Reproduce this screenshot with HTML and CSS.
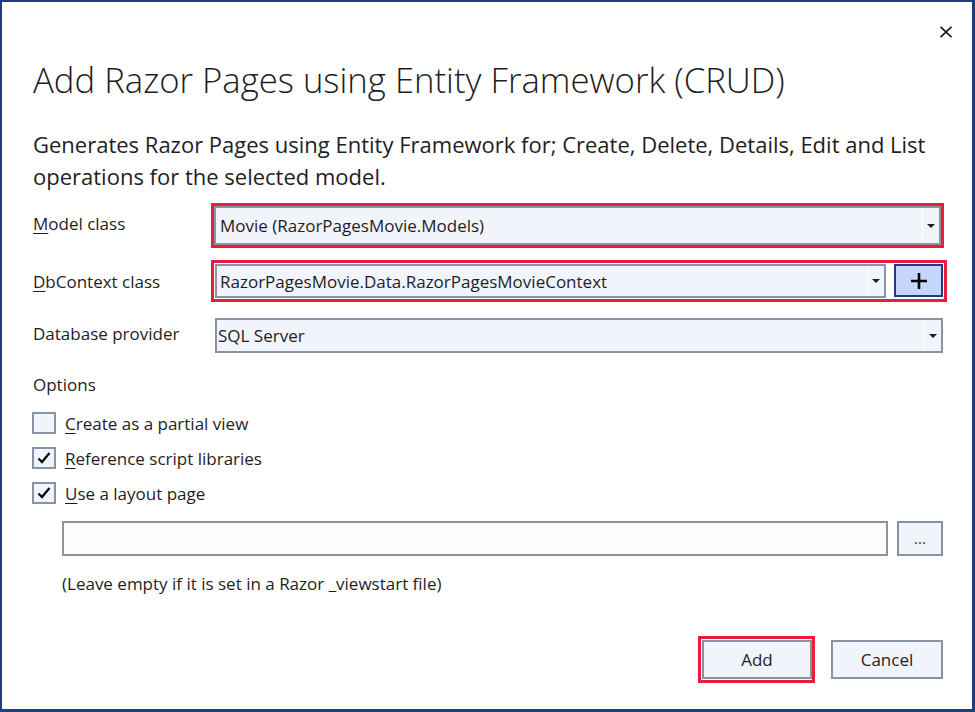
FILE: index.html
```html
<!DOCTYPE html>
<html lang="en">
<head>
<meta charset="utf-8">
<title>Add Razor Pages using Entity Framework (CRUD)</title>
<link rel="stylesheet" href="styles.css">
</head>
<body>
<div class="dialog">
  <div class="titlebar">
    <button class="close" aria-label="Close">
      <svg width="14" height="12" viewBox="0 0 14 12"><path d="M1.5 0.8 L12.5 11.2 M12.5 0.8 L1.5 11.2" stroke="#1e1e1e" stroke-width="1.7" fill="none"/></svg>
    </button>
  </div>
  <h1 class="title">Add Razor Pages using Entity Framework (CRUD)</h1>
  <p class="desc">Generates Razor Pages using Entity Framework for; Create, Delete, Details, Edit and List<br>operations for the selected model.</p>

  <div class="field field-model">
    <label class="label"><u>M</u>odel class</label>
    <div class="ring ring-model">
      <div class="combo combo-tall">
        <span class="combo-text">Movie (RazorPagesMovie.Models)</span>
        <span class="combo-arrow"><span class="tri"></span></span>
      </div>
    </div>
  </div>

  <div class="field field-db">
    <label class="label"><u>D</u>bContext class</label>
    <div class="ring ring-db">
      <div class="combo combo-db">
        <span class="combo-text">RazorPagesMovie.Data.RazorPagesMovieContext</span>
        <span class="combo-arrow"><span class="tri"></span></span>
      </div>
      <button class="plus" aria-label="Add">
        <svg width="18" height="18" viewBox="0 0 18 18"><path d="M9 1 V17 M1 9 H17" stroke="#000" stroke-width="2.6" fill="none"/></svg>
      </button>
    </div>
  </div>

  <div class="field field-provider">
    <label class="label">Database provider</label>
    <div class="combo combo-provider">
      <span class="combo-text">SQL Server</span>
      <span class="combo-arrow"><span class="tri"></span></span>
    </div>
  </div>

  <div class="options-label">Options</div>

  <div class="checks">
    <div class="check">
      <span class="box"></span>
      <span class="check-text"><u>C</u>reate as a partial view</span>
    </div>
    <div class="check">
      <span class="box"><svg width="16" height="14" viewBox="0 0 16 14"><path d="M2.5 7.5 L6 11 L13.5 2" stroke="#000" stroke-width="2.2" fill="none"/></svg></span>
      <span class="check-text"><u>R</u>eference script libraries</span>
    </div>
    <div class="check">
      <span class="box"><svg width="16" height="14" viewBox="0 0 16 14"><path d="M2.5 7.5 L6 11 L13.5 2" stroke="#000" stroke-width="2.2" fill="none"/></svg></span>
      <span class="check-text"><u>U</u>se a layout page</span>
    </div>
  </div>

  <div class="layout-row">
    <div class="textbox"></div>
    <button class="browse">...</button>
  </div>
  <p class="hint">(Leave empty if it is set in a Razor _viewstart file)</p>

  <div class="actions">
    <div class="ring ring-add"><button class="btn">Add</button></div>
    <button class="btn btn-cancel">Cancel</button>
  </div>
</div>
</body>
</html>
```

FILE: styles.css
```css
* { box-sizing: border-box; }
html, body { margin: 0; padding: 0; background: #fff; }
body { font-family: "Open Sans", "Noto Sans", sans-serif; color: #1e1e1e; }

.dialog {
  width: 975px;
  height: 712px;
  border-style: solid;
  border-color: #1f3d7a;
  border-width: 2px 3px 3px 2px;
  padding: 0 25px 0 31px;
  display: flex;
  flex-direction: column;
}

.titlebar {
  display: flex;
  justify-content: flex-end;
  height: 48px;
  padding-top: 24px;
  margin-right: -6px;
}
.close {
  border: 0;
  background: transparent;
  padding: 0;
  width: 14px;
  height: 12px;
  display: flex;
}

.title {
  margin: 8px 0 0 0;
  font-weight: 300;
  font-size: 34.7px;
  line-height: 44px;
}

.desc {
  margin: 26px 0 0 0;
  font-size: 22px;
  line-height: 32px;
  color: #1e1e1e;
}

.field {
  display: flex;
  align-items: center;
}
.label {
  width: 178px;
  flex: none;
  font-size: 17px;
  line-height: 22px;
}
u { text-decoration: underline; text-underline-offset: 3px; text-decoration-thickness: 1px; }

.field-model { margin-top: 11px; }
.field-db { margin-top: 12px; }
.field-provider { margin-top: 16px; }
.field-model .label { margin-top: -4px; }
.field-db .label { margin-top: 2px; }
.field-provider .label { margin-top: -4px; }

.ring { border: 3px solid #ec1c3d; }
.ring-model { width: 733px; height: 45px; }
.ring-db {
  width: 736px;
  height: 42px;
  display: flex;
  align-items: flex-start;
  gap: 8px;
  padding: 1px;
}

.combo {
  display: flex;
  align-items: center;
  background: #f1f4fb;
  border: 2px solid #8893a6;
  font-size: 17px;
  color: #1e1e1e;
}
.combo-text { flex: 1; padding-left: 4px; white-space: nowrap; overflow: hidden; }
.combo-tall { width: 100%; height: 100%; }
.combo-db { width: 671px; height: 34px; }
.combo-db .combo-text { padding-left: 3px; }
.combo-provider { width: 728px; height: 35px; margin-left: 4px; }
.combo-provider .combo-text { padding-left: 1px; }
.combo-arrow {
  width: 17px;
  align-self: stretch;
  border-left: 1px solid #ffffff;
  display: flex;
  align-items: center;
  justify-content: center;
}
.tri {
  width: 0; height: 0;
  border-left: 4px solid transparent;
  border-right: 4px solid transparent;
  border-top: 4px solid #1e1e1e;
}

.plus {
  width: 49px;
  height: 33px;
  background: #c5d6fa;
  border: 2px solid #1f3d7a;
  padding: 0;
  display: flex;
  align-items: center;
  justify-content: center;
}

.options-label {
  margin-top: 21px;
  font-size: 17px;
  line-height: 21px;
}

.checks {
  margin-top: 17px;
  display: flex;
  flex-direction: column;
  gap: 13px;
}
.check { display: flex; align-items: center; }
.box {
  width: 24px;
  height: 22px;
  background: #f1f4fb;
  border: 2px solid #8893a6;
  margin-left: -1px;
  display: flex;
  align-items: center;
  justify-content: center;
}
.check-text { margin-left: 9px; font-size: 17px; line-height: 21px; }

.layout-row {
  margin-top: 17px;
  margin-left: 29px;
  display: flex;
  gap: 9px;
}
.textbox {
  width: 826px;
  height: 35px;
  background: #fcfcfc;
  border: 2px solid #8893a6;
}
.browse {
  width: 46px;
  height: 35px;
  background: #f1f4fb;
  border: 2px solid #8893a6;
  font-family: inherit;
  font-size: 15px;
  color: #333;
  padding: 0;
  line-height: 1;
}

.hint {
  margin: 17px 0 0 29px;
  font-size: 17px;
  line-height: 21px;
}

.actions {
  margin-top: auto;
  margin-bottom: 26px;
  display: flex;
  justify-content: flex-end;
  align-items: center;
  gap: 16px;
  margin-right: 4px;
}
.ring-add { padding: 1px 0 1px 1px; }
.btn {
  width: 110px;
  height: 39px;
  background: #f1f4fb;
  border: 2px solid #8893a6;
  font-family: inherit;
  font-size: 17px;
  color: #1e1e1e;
  padding: 0;
  display: block;
}
.btn-cancel { width: 112px; }
```
